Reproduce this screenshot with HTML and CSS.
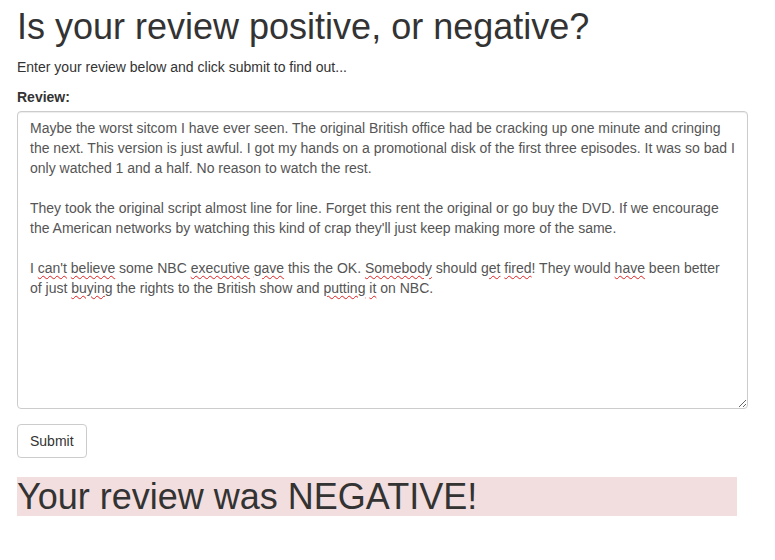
FILE: index.html
```html
<!DOCTYPE html>
<html>
<head>
<meta charset="utf-8">
<link rel="stylesheet" href="styles.css">
</head>
<body>
<div class="page">
  <h1 class="title">Is your review positive, or negative?</h1>
  <p class="lead-text">Enter your review below and click submit to find out...</p>
  <form class="review-form">
    <div class="form-group">
      <label class="field-label">Review:</label>
      <div class="review-box" contenteditable="true" role="textbox" spellcheck="false">
        <p class="para">Maybe the worst sitcom I have ever seen. The original British office had be cracking up one minute and cringing the next. This version is just awful. I got my hands on a promotional disk of the first three episodes. It was so bad I only watched 1 and a half. No reason to watch the rest.</p>
        <p class="para">They took the original script almost line for line. Forget this rent the original or go buy the DVD. If we encourage the American networks by watching this kind of crap they'll just keep making more of the same.</p>
        <p class="para">I <span class="sp">can't</span> <span class="sp">believe</span> some NBC <span class="sp">executive</span> <span class="sp">gave</span> this the OK. <span class="sp">Somebody</span> should <span class="sp">get</span> <span class="sp">fired</span>! They would <span class="sp">have</span> been better of just <span class="sp">buying</span> the rights to the British show and <span class="sp">putting</span> <span class="sp">it</span> on NBC.</p>
      </div>
    </div>
    <button type="button" class="btn">Submit</button>
  </form>
  <h1 class="result">Your review was NEGATIVE!</h1>
</div>
</body>
</html>
```

FILE: styles.css
```css
html, body {
  margin: 0;
  padding: 0;
  background: #fff;
}
body {
  font-family: "Liberation Sans", Arial, Helvetica, sans-serif;
  font-size: 14px;
  line-height: 20px;
  color: #333;
}
.page {
  padding: 7px 0 0 17px;
  width: 720px;
}
.title {
  font-size: 36px;
  font-weight: 500;
  line-height: 1.1;
  margin: 0 0 10px;
  color: #333;
}
.lead-text {
  margin: 0 0 10px;
}
.review-form {
  margin: 0;
}
.form-group {
  margin-bottom: 15px;
}
.field-label {
  display: block;
  font-weight: bold;
  margin-bottom: 4px;
}
.review-box {
  box-sizing: border-box;
  width: 731px;
  height: 298px;
  padding: 6px 12px;
  border: 1px solid #ccc;
  border-radius: 4px;
  box-shadow: inset 0 1px 1px rgba(0,0,0,.075);
  color: #555;
  font-size: 14px;
  line-height: 20px;
  overflow: auto;
  resize: vertical;
  outline: none;
  background: #fff;
}
.para {
  margin: 0 0 20px;
}
.para:last-child {
  margin-bottom: 0;
}
.sp {
  text-decoration: underline wavy #e02020;
  text-decoration-thickness: 1px;
  text-underline-offset: 2px;
}
.btn {
  display: block;
  box-sizing: border-box;
  height: 34px;
  padding: 6px 12px;
  font-family: inherit;
  font-size: 14px;
  line-height: 20px;
  color: #333;
  background: #fff;
  border: 1px solid #ccc;
  border-radius: 4px;
  cursor: pointer;
}
.result {
  font-size: 36px;
  font-weight: 500;
  line-height: 1.1;
  margin: 19px 0 10px;
  background: #f2dede;
  color: #333;
}
```
